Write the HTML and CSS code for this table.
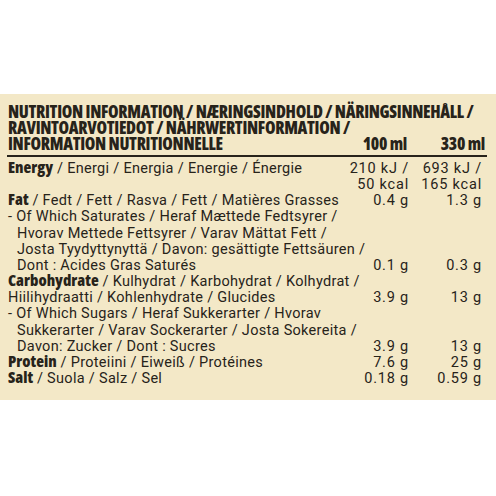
FILE: index.html
```
<!DOCTYPE html>
<html lang="en">
<head>
<meta charset="utf-8">
<title>Nutrition information</title>
<link rel="stylesheet" href="styles.css">
</head>
<body>
<section class="label">
  <header class="head">
    <div class="head-title">NUTRITION INFORMATION / NÆRINGSINDHOLD / NÄRINGSINNEHÅLL /<br>RAVINTOARVOTIEDOT / NÄHRWERTINFORMATION /</div>
    <div class="head-row">
      <div class="head-title">INFORMATION NUTRITIONNELLE</div>
      <div class="head-col">100 ml</div>
      <div class="head-col">330 ml</div>
    </div>
  </header>
  <div class="table">
    <div class="name"><b>Energy</b> / Energi / Energia / Energie / Énergie</div>
    <div class="val">210 kJ /<br>50 kcal</div>
    <div class="val">693 kJ /<br>165 kcal</div>

    <div class="name"><b>Fat</b> / Fedt / Fett / Rasva / Fett / Matières Grasses</div>
    <div class="val">0.4 g</div>
    <div class="val">1.3 g</div>

    <div class="name sub">- Of Which Saturates / Heraf Mættede Fedtsyrer /<br>Hvorav Mettede Fettsyrer / Varav Mättat Fett /<br>Josta Tyydyttynyttä / Davon: gesättigte Fettsäuren /<br>Dont : Acides Gras Saturés</div>
    <div class="val">0.1 g</div>
    <div class="val">0.3 g</div>

    <div class="name"><b>Carbohydrate</b> / Kulhydrat / Karbohydrat / Kolhydrat /<br>Hiilihydraatti / Kohlenhydrate / Glucides</div>
    <div class="val">3.9 g</div>
    <div class="val">13 g</div>

    <div class="name sub">- Of Which Sugars / Heraf Sukkerarter / Hvorav<br>Sukkerarter / Varav Sockerarter / Josta Sokereita /<br>Davon: Zucker / Dont : Sucres</div>
    <div class="val">3.9 g</div>
    <div class="val">13 g</div>

    <div class="name"><b>Protein</b> / Proteiini / Eiweiß / Protéines</div>
    <div class="val">7.6 g</div>
    <div class="val">25 g</div>

    <div class="name"><b>Salt</b> / Suola / Salz / Sel</div>
    <div class="val">0.18 g</div>
    <div class="val">0.59 g</div>
  </div>
</section>
</body>
</html>
```
FILE: styles.css
```
html, body {
  margin: 0;
  padding: 0;
  background: #ffffff;
}

.label {
  margin-top: 94px;
  height: 306px;
  box-sizing: border-box;
  background: #f3e8c7;
  padding: 10px 14px 0 8px;
  color: #27231a;
}

.head {
  font-family: "Open Sans", sans-serif;
  font-stretch: condensed;
  font-weight: 800;
  font-size: 17px;
  letter-spacing: -0.3px;
  line-height: 16px;
  white-space: nowrap;
  margin: 0 -5px 0 -1px;
  padding: 0 2px 3px 1px;
  border-bottom: 2px solid #27231a;
}

.head-row {
  display: grid;
  grid-template-columns: minmax(0, 1fr) 64px 78px;
}

.head-col {
  text-align: right;
}

.table {
  display: grid;
  grid-template-columns: minmax(0, 1fr) 64px 73px;
  font-family: "Roboto", sans-serif;
  font-size: 14.5px;
  letter-spacing: 0.3px;
  line-height: 16.15px;
  margin-top: 4px;
}

.name {
  white-space: nowrap;
}

.name b {
  font-family: "Open Sans", sans-serif;
  font-stretch: condensed;
  font-weight: 800;
  font-size: 16px;
  letter-spacing: 0;
  line-height: 0;
}

.sub {
  padding-left: 9px;
  text-indent: -9px;
}

.val {
  align-self: end;
  text-align: right;
  white-space: nowrap;
  letter-spacing: 0.8px;
}
```
